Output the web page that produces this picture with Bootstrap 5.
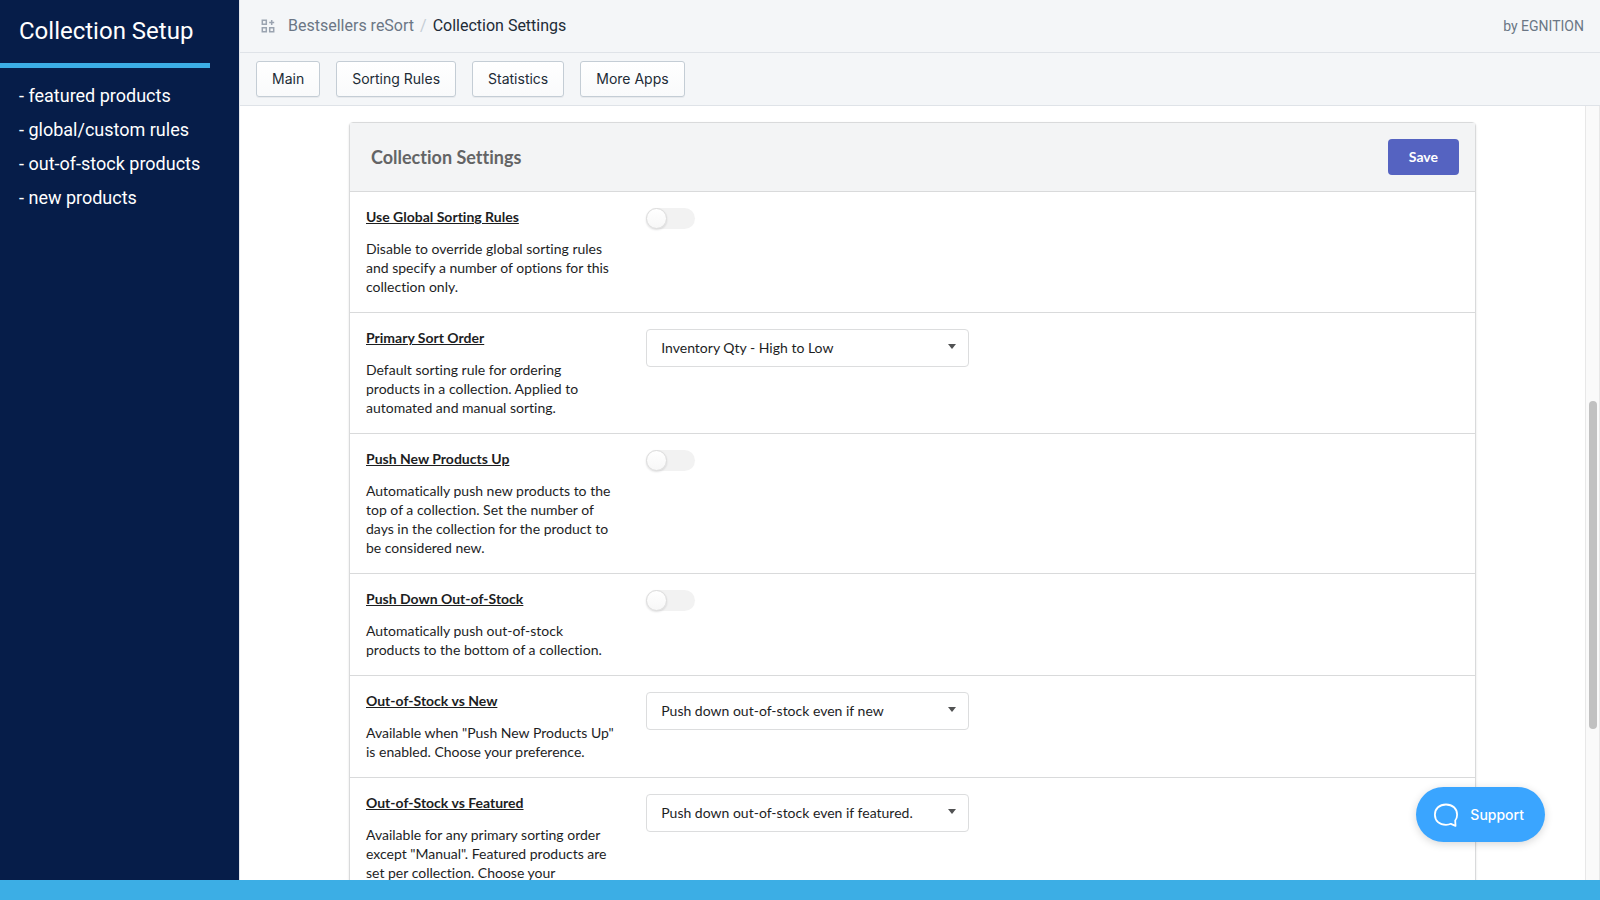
<!DOCTYPE html>
<html lang="en">
<head>
<meta charset="utf-8">
<meta name="viewport" content="width=device-width, initial-scale=1">
<title>Collection Settings</title>
<link href="https://cdn.jsdelivr.net/npm/bootstrap@5.3.0/dist/css/bootstrap.min.css" rel="stylesheet">
<style>
  body { font-family: "Inter", "Roboto", sans-serif; color: #212b36; }
  .side { flex: 0 0 15%; background: #061d49; color: #fff; font-family: "Roboto", sans-serif; border-right: 1px solid #e3e6ea; }
  .side h1 { font-size: 24px; line-height: 32px; padding: 15px 0 16px 19px; }
  .side-rule { width: 88%; height: 5px; background: #3caee5; }
  .side ul { font-size: 18px; line-height: 34px; padding: 11px 0 0 19px; }
  .topbar, .toolbar { background: #f4f6f8; border-bottom: 1px solid #dfe3e8; height: 53px; }
  .topbar { font-family: "Roboto", sans-serif; font-size: 16px; padding: 0 16px 0 20px; }
  .topbar a { color: #6b7685; text-decoration: none; }
  .topbar .slash { color: #c4cdd5; padding: 0 6px; }
  .topbar .author { font-size: 14px; color: #6b7685; }
  .crumb-icon { width: 16px; height: 16px; color: #9aa3b0; }
  .btn-tool { font-size: 14px; line-height: 20px; padding: 7px 15px; color: #212b36; background: linear-gradient(#fff, #f9fafb); border: 1px solid #c4cdd5; border-radius: 3px; box-shadow: 0 1px 0 rgba(22, 29, 37, .05); }
  .settings { max-width: 1127px; font-family: "Lato", sans-serif; font-variant-ligatures: none; color: #1d1e1f; border: 1px solid #d9dadb; border-radius: 4px; box-shadow: 0 1px 2px rgba(34, 36, 38, .15); }
  .settings-head { background: #f3f4f5; padding: 16px 16px 16px 21px; border-bottom: 1px solid #d9dadb; }
  .settings-head h2 { font-size: 18px; line-height: 24px; color: #636465; }
  .btn-save { font-size: 14px; line-height: 16px; padding: 10px 21px; color: #fff; background: #5563c1; border: 0; border-radius: 4px; }
  .setting { padding: 16px 0; border-bottom: 1px solid #d9dadb; }
  .setting > div { padding: 0 15px 0 16px; }
  .setting > .setting-control { padding-left: 15px; }
  .setting-name { display: block; font-size: 14px; line-height: 18px; margin-bottom: 13px; }
  .setting p { font-size: 14px; line-height: 19px; }
  .toggle { appearance: none; display: block; width: 49px; height: 21px; margin: 0; border-radius: 11px; background: #f2f2f2; }
  .toggle::before { content: ""; display: block; width: 21px; height: 21px; border-radius: 50%; background: linear-gradient(#fff, #f7f7f7); border: 1px solid #dcdcdc; box-shadow: 0 1px 2px rgba(34, 36, 38, .15); }
  .toggle:checked { background: #2185d0; }
  .toggle:checked::before { margin-left: auto; }
  .pick { appearance: none; display: block; width: 100%; max-width: 323px; height: 38px; padding: 0 32px 2px 14px; font-size: 14px; color: #1d1e1f; border: 1px solid #dcddde; border-radius: 4px; background: #fff url("data:image/svg+xml,%3Csvg xmlns='http://www.w3.org/2000/svg' viewBox='0 0 8 5'%3E%3Cpath d='M0 0h8L4 5z' fill='%23515253'/%3E%3C/svg%3E") no-repeat right 12px top 14px / 8px 5px; }
  .track { flex: 0 0 15px; background: #fafafa; border: solid #e8e8e8; border-width: 0 1px; }
  .thumb { flex: 328 0 0; width: 8px; border-radius: 4px; background: #c1c1c1; }
  .gap-above { flex: 295 0 0; }
  .gap-below { flex: 151 0 0; }
  .btn-chat { right: 55px; bottom: 38px; height: 55px; padding: 0 21px 0 18px; gap: 12px; border: 0; border-radius: 28px; background: #3aa5ff; color: #fff; font-size: 14px; font-weight: 500; box-shadow: 0 2px 8px rgba(0, 0, 0, .16); }
  .bottom-bar { flex: 0 0 20px; background: #3caee5; }
</style>
</head>
<body>
<div class="vh-100 d-flex flex-column overflow-hidden">
  <div class="d-flex flex-grow-1 overflow-hidden">
    <aside class="side">
      <h1 class="m-0 fw-normal">Collection Setup</h1>
      <div class="side-rule"></div>
      <ul class="list-unstyled m-0">
        <li>- featured products</li>
        <li>- global/custom rules</li>
        <li>- out-of-stock products</li>
        <li>- new products</li>
      </ul>
    </aside>
    <div class="d-flex flex-column flex-grow-1 overflow-hidden position-relative">
      <header class="topbar d-flex align-items-center flex-shrink-0">
        <svg class="crumb-icon me-2" viewBox="0 0 16 16" fill="none" stroke="currentColor" stroke-width="1.5" aria-hidden="true"><path d="M2.300 2.300h4v4h-4zM2.300 9.700h4v4h-4zM9.700 9.700h4v4h-4zM11.700 2v5M9.200 4.500h5"/></svg>
        <nav class="d-flex ms-1" aria-label="Breadcrumb">
          <a href="#">Bestsellers reSort</a><span class="slash">/</span><span>Collection Settings</span>
        </nav>
        <span class="author ms-auto">by EGNITION</span>
      </header>
      <div class="toolbar d-flex align-items-center gap-3 px-3 flex-shrink-0">
        <button type="button" class="btn btn-tool">Main</button>
        <button type="button" class="btn btn-tool">Sorting Rules</button>
        <button type="button" class="btn btn-tool">Statistics</button>
        <button type="button" class="btn btn-tool">More Apps</button>
      </div>
      <div class="d-flex flex-grow-1 overflow-hidden">
        <main class="flex-grow-1 overflow-hidden pt-3">
          <form class="settings mx-auto">
            <div class="settings-head d-flex align-items-center justify-content-between">
              <h2 class="m-0 fw-bold">Collection Settings</h2>
              <button type="button" class="btn btn-save fw-bold">Save</button>
            </div>
            <div class="setting row g-0">
              <div class="col-3">
                <label class="setting-name fw-bold text-decoration-underline" for="global">Use Global Sorting Rules</label>
                <p class="m-0">Disable to override global sorting rules and specify a number of options for this collection only.</p>
              </div>
              <div class="setting-control col-9"><input class="toggle" type="checkbox" role="switch" id="global"></div>
            </div>
            <div class="setting row g-0">
              <div class="col-3">
                <label class="setting-name fw-bold text-decoration-underline" for="order">Primary Sort Order</label>
                <p class="m-0">Default sorting rule for ordering products in a collection. Applied to automated and manual sorting.</p>
              </div>
              <div class="setting-control col-9"><select class="pick" id="order"><option>Inventory Qty - High to Low</option></select></div>
            </div>
            <div class="setting row g-0">
              <div class="col-3">
                <label class="setting-name fw-bold text-decoration-underline" for="push-new">Push New Products Up</label>
                <p class="m-0">Automatically push new products to the top of a collection. Set the number of days in the collection for the product to be considered new.</p>
              </div>
              <div class="setting-control col-9"><input class="toggle" type="checkbox" role="switch" id="push-new"></div>
            </div>
            <div class="setting row g-0">
              <div class="col-3">
                <label class="setting-name fw-bold text-decoration-underline" for="push-down">Push Down Out-of-Stock</label>
                <p class="m-0">Automatically push out-of-stock products to the bottom of a collection.</p>
              </div>
              <div class="setting-control col-9"><input class="toggle" type="checkbox" role="switch" id="push-down"></div>
            </div>
            <div class="setting row g-0">
              <div class="col-3">
                <label class="setting-name fw-bold text-decoration-underline" for="vs-new">Out-of-Stock vs New</label>
                <p class="m-0">Available when "Push New Products Up" is enabled. Choose your preference.</p>
              </div>
              <div class="setting-control col-9"><select class="pick" id="vs-new"><option>Push down out-of-stock even if new</option></select></div>
            </div>
            <div class="setting row g-0">
              <div class="col-3">
                <label class="setting-name fw-bold text-decoration-underline" for="vs-featured">Out-of-Stock vs Featured</label>
                <p class="m-0">Available for any primary sorting order except "Manual". Featured products are set per collection. Choose your preference.</p>
              </div>
              <div class="setting-control col-9"><select class="pick" id="vs-featured"><option>Push down out-of-stock even if featured.</option></select></div>
            </div>
          </form>
        </main>
        <div class="track d-flex flex-column align-items-center" aria-hidden="true">
          <div class="gap-above"></div>
          <div class="thumb"></div>
          <div class="gap-below"></div>
        </div>
      </div>
      <button type="button" class="btn-chat position-absolute d-flex align-items-center">
        <svg width="24" height="24" viewBox="0 0 24 24" fill="none" stroke="currentColor" stroke-width="1.8" stroke-linejoin="round" aria-hidden="true"><path d="M21.200 17.500C22.500 16 23.100 14 23.100 11.700C23.100 5.500 18.500 1.500 12 1.500S.9 5.500.9 11.700S5.500 21.800 12 21.800c1.900 0 3.500-.3 4.900-1l4.600 2z"/></svg>
        <span>Support</span>
      </button>
    </div>
  </div>
  <div class="bottom-bar"></div>
</div>
<script src="https://cdn.jsdelivr.net/npm/bootstrap@5.3.0/dist/js/bootstrap.bundle.min.js"></script>
</body>
</html>
